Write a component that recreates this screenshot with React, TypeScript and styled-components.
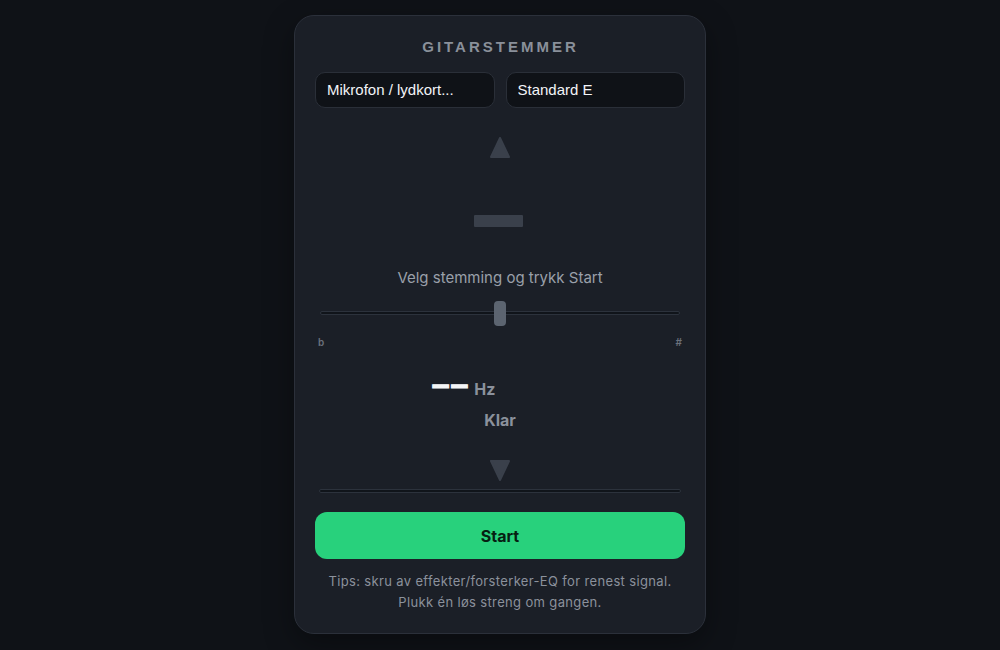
import React, { useState } from 'react'
import styled, { createGlobalStyle } from 'styled-components'

const GlobalStyle = createGlobalStyle`
  html, body {
    margin: 0;
    padding: 0;
    background: #0f1217;
    font-family: Inter, "Liberation Sans", Arial, sans-serif;
  }
`

const Page = styled.div`
  min-height: 650px;
  display: flex;
  justify-content: center;
  align-items: flex-start;
  padding-top: 15px;
  box-sizing: border-box;
`

const Card = styled.div`
  width: 412px;
  box-sizing: border-box;
  background: #1b1f27;
  border: 1px solid #2b303a;
  border-radius: 20px;
  padding: 20px 20px 20px;
  display: flex;
  flex-direction: column;
  box-shadow: 0 10px 30px rgba(0, 0, 0, 0.35);
`

const Title = styled.h1`
  margin: 1px 0 0;
  font-family: "Liberation Sans", Arial, sans-serif;
  font-size: 15px;
  line-height: 20px;
  font-weight: 700;
  letter-spacing: 3px;
  text-align: center;
  color: #8a909a;
  padding-left: 1px;
`

const SelectRow = styled.div`
  display: grid;
  grid-template-columns: 1fr 1fr;
  gap: 11px;
  margin-top: 15px;
`

const Select = styled.select`
  appearance: none;
  -webkit-appearance: none;
  height: 36px;
  width: 100%;
  box-sizing: border-box;
  background: #0f1217;
  border: 1px solid #2a2f38;
  border-radius: 10px;
  color: #f2f4f7;
  font-family: "Liberation Sans", Arial, sans-serif;
  font-size: 15px;
  padding: 0 11px 1px;
  outline: none;
`

const Meter = styled.div`
  display: flex;
  flex-direction: column;
  align-items: center;
`

const Arrow = styled.svg<{ $top: number }>`
  display: block;
  margin-top: ${p => p.$top}px;
`

const NoteDash = styled.div`
  width: 49px;
  height: 12px;
  margin-top: 56px;
  margin-right: 3px;
  background: #3a404b;
  border-radius: 1px;
`

const Status = styled.div`
  margin-top: 41px;
  font-size: 15px;
  line-height: 20px;
  color: #9aa0aa;
`

const SliderWrap = styled.div`
  position: relative;
  width: 360px;
  height: 26px;
  margin-top: 12px;
  display: flex;
  align-items: center;
`

const Track = styled.div`
  width: 100%;
  height: 4px;
  box-sizing: border-box;
  background: #10141a;
  border: 1px solid #2c323c;
  border-radius: 2px;
`

const Thumb = styled.div`
  position: absolute;
  left: 50%;
  top: 1px;
  width: 12px;
  height: 25px;
  margin-left: -6px;
  border-radius: 4px;
  background: #5c6470;
`

const ScaleLabels = styled.div`
  width: 364px;
  display: flex;
  justify-content: space-between;
  margin-top: 9px;
  font-size: 10px;
  line-height: 14px;
  font-weight: 600;
  color: #6b717c;
`

const FreqRow = styled.div`
  display: flex;
  align-items: baseline;
  justify-content: center;
  margin-top: 23px;
  padding-right: 73px;
  height: 24px;
`

const FreqValue = styled.span`
  font-family: "Liberation Sans", Arial, sans-serif;
  font-size: 32px;
  line-height: 24px;
  font-weight: 700;
  color: #f4f5f7;
  -webkit-text-stroke: 1.2px #f4f5f7;
  letter-spacing: 1px;
`

const Unit = styled.span`
  margin-left: 5px;
  font-size: 16px;
  font-weight: 700;
  color: #8b919c;
`

const StateLabel = styled.div`
  margin-top: 14px;
  font-size: 16px;
  line-height: 20px;
  font-weight: 700;
  color: #8b919c;
`

const Progress = styled.div`
  width: 362px;
  height: 4px;
  margin-top: 8px;
  box-sizing: border-box;
  background: #10141a;
  border: 1px solid #2c323c;
  border-radius: 2px;
`

const StartButton = styled.button`
  margin-top: 19px;
  height: 47px;
  width: 100%;
  border: none;
  border-radius: 12px;
  background: #28d17c;
  color: #062012;
  font-family: Inter, "Liberation Sans", Arial, sans-serif;
  font-size: 16px;
  font-weight: 700;
  cursor: pointer;
`

const Tips = styled.p`
  margin: 12px 0 0;
  font-size: 13px;
  line-height: 21px;
  letter-spacing: 0.35px;
  text-align: center;
  color: #8b919c;
`

function Triangle({ down, top }: { down?: boolean; top: number }) {
  const points = down ? '2,2 20,2 11,21' : '11,1 20,20 2,20'
  return (
    <Arrow $top={top} width="22" height="22" viewBox="0 0 22 22">
      <polygon points={points} fill="#3a404b" stroke="#3a404b" strokeWidth="2" strokeLinejoin="round" />
    </Arrow>
  )
}

export default function App() {
  const [running, setRunning] = useState(false)

  return (
    <Page>
      <GlobalStyle />
      <Card>
        <Title>GITARSTEMMER</Title>
        <SelectRow>
          <Select defaultValue="mic">
            <option value="mic">Mikrofon / lydkort...</option>
          </Select>
          <Select defaultValue="std">
            <option value="std">Standard E</option>
            <option value="drop">Drop D</option>
            <option value="half">Eb (halvt ned)</option>
          </Select>
        </SelectRow>
        <Meter>
          <Triangle top={29} />
          <NoteDash />
          <Status>Velg stemming og trykk Start</Status>
          <SliderWrap>
            <Track />
            <Thumb />
          </SliderWrap>
          <ScaleLabels>
            <span>b</span>
            <span>#</span>
          </ScaleLabels>
          <FreqRow>
            <FreqValue>––</FreqValue>
            <Unit>Hz</Unit>
          </FreqRow>
          <StateLabel>Klar</StateLabel>
          <Triangle down top={29} />
          <Progress />
        </Meter>
        <StartButton onClick={() => setRunning(!running)}>{running ? 'Stopp' : 'Start'}</StartButton>
        <Tips>
          Tips: skru av effekter/forsterker-EQ for renest signal.
          <br />
          Plukk én løs streng om gangen.
        </Tips>
      </Card>
    </Page>
  )
}
